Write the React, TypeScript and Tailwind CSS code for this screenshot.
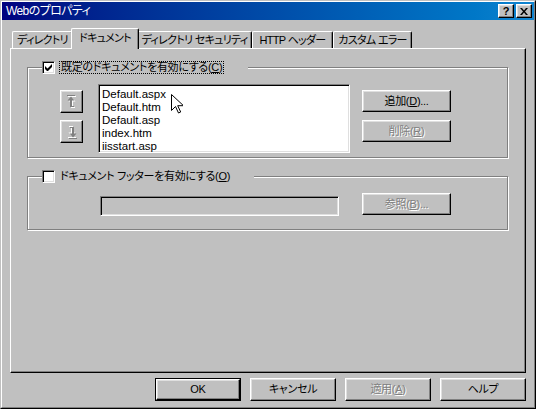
import type { ReactNode } from "react"

const font = "font-['Liberation_Sans','Noto_Sans_CJK_JP',sans-serif] [font-feature-settings:'palt']"
const raised =
  "border border-t-white border-l-white border-r-black border-b-black bg-[#c0c0c0] shadow-[inset_-1px_-1px_0_#808080,inset_1px_1px_0_#dfdfdf]"
const sunken =
  "border border-t-[#808080] border-l-[#808080] border-r-white border-b-white shadow-[inset_1px_1px_0_#000,inset_-1px_-1px_0_#dfdfdf]"
const dim = "text-[#808080] [text-shadow:1px_1px_0_#fff]"

function Btn({ children, disabled, className = "" }: { children: ReactNode; disabled?: boolean; className?: string }) {
  return (
    <div
      className={`flex items-center justify-center text-[11px] tracking-[-0.3px] leading-none ${raised} ${disabled ? dim : "text-black"} ${className}`}
    >
      {children}
    </div>
  )
}

function Check({ checked }: { checked?: boolean }) {
  return (
    <div className={`w-[13px] h-[13px] bg-white flex items-center justify-center ${sunken}`}>
      {checked && (
        <svg width="7" height="7" viewBox="0 0 7 7">
          <path d="M0 2v3l2 2h1l4-4V0L2.5 4.5z" fill="#000" />
        </svg>
      )}
    </div>
  )
}

function Arrow({ down }: { down?: boolean }) {
  const shape = (
    <>
      <rect x="0" y="0" width="8" height="1" />
      <polygon points="4,1.5 0.5,5.5 7.5,5.5" />
      <rect x="3" y="5" width="2" height="7" />
      <rect x="3" y="11" width="4" height="1" />
    </>
  )
  return (
    <svg width="10" height="14" viewBox="0 0 10 14" className={down ? "rotate-180" : ""}>
      <g fill="#fff" transform="translate(1 1)">{shape}</g>
      <g fill="#808080">{shape}</g>
    </svg>
  )
}

const tabs = [
  { label: "ディレクトリ", w: "w-[61px]" },
  { label: "ドキュメント", w: "w-[68px]", active: true },
  { label: "ディレクトリ セキュリティ", w: "w-[115px]" },
  { label: "HTTP ヘッダー", w: "w-[81px]" },
  { label: "カスタム エラー", w: "w-[79px]" },
]

const docs = ["Default.aspx", "Default.htm", "Default.asp", "index.htm", "iisstart.asp"]

const tabBase =
  "flex justify-center text-[11px] tracking-[-0.7px] leading-none whitespace-nowrap bg-[#c0c0c0] border-l border-t border-r border-l-white border-t-white border-r-black rounded-t-[2px] shadow-[inset_-1px_0_0_#808080]"

export default function App() {
  return (
    <div className={`relative w-[536px] h-[409px] bg-[#c0c0c0] border border-t-[#c0c0c0] border-l-[#c0c0c0] border-r-black border-b-black ${font}`}>
      <div className="h-full border border-t-white border-l-white border-r-[#808080] border-b-[#808080]">
        {/* title bar */}
        <div className="flex items-center h-[18px] bg-linear-to-r from-[#000080] to-[#1084d0] pl-[4px] pr-[2px]">
          <span className="text-white text-[12px] tracking-[-0.6px] leading-none">Webのプロパティ</span>
          <div className="ml-auto flex gap-[2px]">
            <div className={`w-[16px] h-[14px] flex items-center justify-center ${raised}`}>
              <span className="text-[11px] font-bold leading-none text-black font-['Liberation_Sans',sans-serif]">?</span>
            </div>
            <div className={`w-[16px] h-[14px] flex items-center justify-center ${raised}`}>
              <svg width="8" height="7" viewBox="0 0 8 7">
                <path d="M0 0h2l2 2.5L6 0h2L5 3.5 8 7H6L4 4.5 2 7H0l3-3.5z" fill="#000" />
              </svg>
            </div>
          </div>
        </div>

        <div className="mx-[8px]">
          {/* tabs */}
          <div className="flex items-end h-[20px] mt-[8px] pl-[2px]">
            {tabs.map((t) =>
              t.active ? (
                <div key={t.label} className={`relative z-10 -mx-[2px] -mb-[1px] h-[21px] ${t.w} items-start pt-[4px] ${tabBase}`}>
                  {t.label}
                </div>
              ) : (
                <div key={t.label} className={`h-[17px] ${t.w} items-center ${tabBase}`}>
                  {t.label}
                </div>
              )
            )}
          </div>

          {/* panel */}
          <div className="h-[325px] border border-t-white border-l-white border-r-black border-b-black shadow-[inset_-1px_-1px_0_#808080] pt-[12px] pl-[16px] pr-[17px]">
            <fieldset className="border border-[#808080] shadow-[inset_1px_1px_0_#fff,1px_1px_0_#fff]">
              <legend className="ml-[14px] w-[206px] flex items-center gap-[4px] h-[13px] bg-[#c0c0c0]">
                <Check checked />
                <span className="h-[13px] px-[1px] flex items-center border border-dotted border-black text-[11px] tracking-[-0.3px] leading-none whitespace-nowrap">
                  既定のドキュメントを有効にする(<u>C</u>)
                </span>
              </legend>
              <div className="flex items-start pl-[32px] pb-[4px]">
                <div className="flex flex-col gap-[7px] mt-[16px]">
                  <div className={`w-[23px] h-[23px] flex items-center justify-center ${raised}`}>
                    <Arrow />
                  </div>
                  <div className={`w-[23px] h-[23px] flex items-center justify-center ${raised}`}>
                    <Arrow down />
                  </div>
                </div>
                <div className={`ml-[15px] mt-[10px] w-[252px] h-[69px] bg-white pl-[3px] pt-[3px] ${sunken}`}>
                  {docs.map((d) => (
                    <div key={d} className="h-[13px] text-[11.5px] leading-[13px] text-black font-['Liberation_Sans',sans-serif]">
                      {d}
                    </div>
                  ))}
                </div>
                <div className="ml-[12px] mt-[16px] flex flex-col gap-[8px]">
                  <Btn className="w-[89px] h-[22px]">
                    追加(<u>D</u>)...
                  </Btn>
                  <Btn disabled className="w-[89px] h-[22px]">
                    削除(<u>R</u>)
                  </Btn>
                </div>
              </div>
            </fieldset>

            <fieldset className="mt-[12px] border border-[#808080] shadow-[inset_1px_1px_0_#fff,1px_1px_0_#fff]">
              <legend className="ml-[14px] w-[212px] flex items-center gap-[5px] h-[13px] bg-[#c0c0c0]">
                <Check />
                <span className="text-[11px] tracking-[-0.3px] leading-none whitespace-nowrap">
                  ドキュメント フッターを有効にする(<u>O</u>)
                </span>
              </legend>
              <div className="flex items-start h-[46px] pl-[72px]">
                <div className={`mt-[13px] w-[239px] h-[20px] bg-[#c0c0c0] ${sunken}`} />
                <Btn disabled className="ml-[23px] mt-[10px] w-[89px] h-[22px]">
                  参照(<u>B</u>)...
                </Btn>
              </div>
            </fieldset>
          </div>
        </div>

        {/* dialog buttons */}
        <div className="flex justify-end gap-[9px] mt-[5px] pr-[8px]">
          <div className="border border-black">
            <Btn className="w-[84px] h-[21px]">OK</Btn>
          </div>
          <Btn className="w-[86px] h-[23px]">キャンセル</Btn>
          <Btn disabled className="w-[86px] h-[23px]">
            適用(<u>A</u>)
          </Btn>
          <Btn className="w-[86px] h-[23px]">ヘルプ</Btn>
        </div>
      </div>

      {/* mouse pointer */}
      <svg className="absolute left-[170px] top-[93px]" width="12" height="20" viewBox="0 0 12 20">
        <path d="M0.5 0.5v16l4-4 3 6.5 2.2-1-3-6.3h5.8z" fill="#fff" stroke="#000" strokeWidth="1" />
      </svg>
    </div>
  )
}
